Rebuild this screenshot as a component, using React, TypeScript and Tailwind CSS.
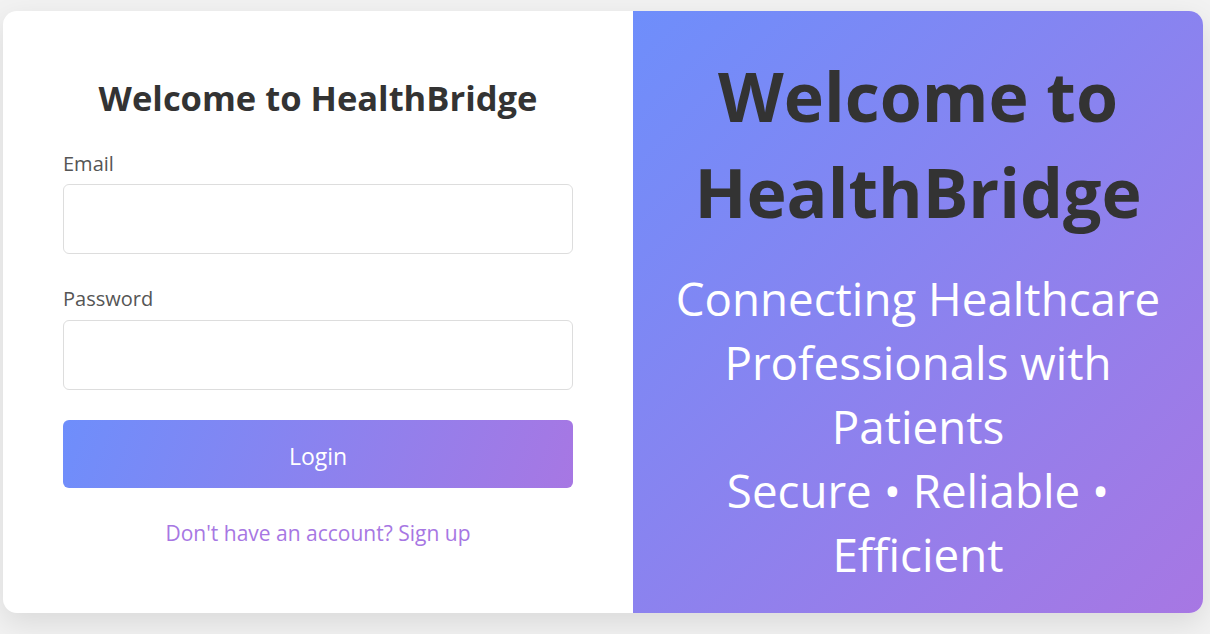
import React from "react";

export default function App() {
  return (
    <div
      className="w-[1210px] h-[634px] bg-[#f2f2f2] pl-[3px] pt-[11px]"
      style={{ fontFamily: '"Open Sans", "Noto Sans", sans-serif' }}
    >
      <div className="flex w-[1200px] h-[602px] rounded-[14px] bg-white shadow-[0_10px_30px_rgba(0,0,0,0.1)] overflow-hidden">
        <div className="w-[630px] px-[60px] pt-[65px] flex flex-col">
          <h2 className="text-center text-[34.5px] leading-[44px] font-bold text-[#333]">
            Welcome to HealthBridge
          </h2>
          <div className="mt-[30px] flex flex-col">
            <label className="text-[20px] leading-[28px] text-[#555]">Email</label>
            <input
              type="email"
              className="mt-[6px] h-[70px] w-full rounded-[6px] border border-[#ddd] bg-white outline-none"
            />
          </div>
          <div className="mt-[31px] flex flex-col">
            <label className="text-[20px] leading-[28px] text-[#555]">Password</label>
            <input
              type="password"
              className="mt-[7px] h-[70px] w-full rounded-[6px] border border-[#ddd] bg-white outline-none"
            />
          </div>
          <button className="mt-[30px] h-[68px] w-full rounded-[6px] bg-[linear-gradient(110deg,#6e8efb,#a777e3)] pt-[4px] text-[23px] text-white">
            Login
          </button>
          <p className="mt-[31px] text-center text-[21px] leading-[28px] text-[#a777e3]">
            Don't have an account? Sign up
          </p>
        </div>
        <div className="flex-1 bg-[linear-gradient(135deg,#6e8efb,#a777e3)] px-[40px] pt-[37px] text-center">
          <h1 className="text-[68px] leading-[96px] font-bold text-[#333]">
            Welcome to HealthBridge
          </h1>
          <p className="mt-[26px] text-[45.7px] leading-[64px] text-white">
            Connecting Healthcare Professionals with Patients
            <br />
            Secure • Reliable • Efficient
          </p>
        </div>
      </div>
    </div>
  );
}
